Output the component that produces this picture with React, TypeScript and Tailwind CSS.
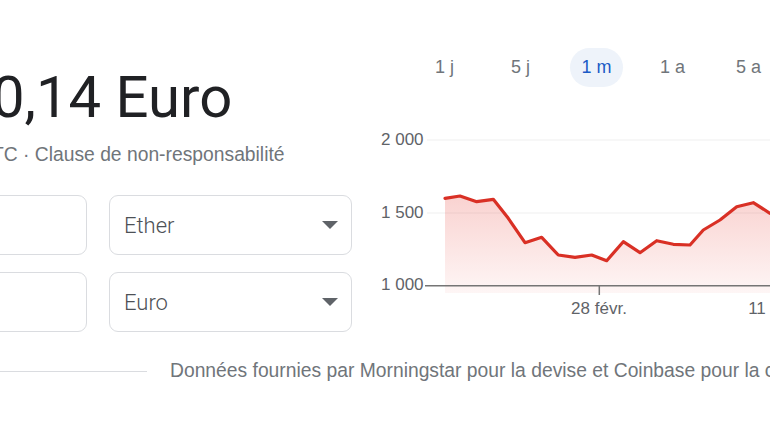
import React from "react";

const points: [number, number][] = [
  [20, 68.3], [35, 66], [51.7, 71.7], [68.3, 69.3], [83.3, 88.3], [100, 112.7],
  [116.7, 107.3], [133.3, 125], [150, 127.3], [166.7, 125], [181.7, 130.7],
  [198.3, 111.7], [215, 122.7], [231.7, 110.7], [248.3, 114.3], [265, 115],
  [278.3, 100], [295, 90], [311.7, 76.7], [328.3, 72.7], [345, 83.3], [362, 92],
];

const tabs = ["1 j", "5 j", "1 m", "1 a", "5 a"];

function Chart() {
  const line = points.map(([x, y], i) => `${i ? "L" : "M"}${x} ${y}`).join(" ");
  const area = `${line} L362 163 L20 163 Z`;
  return (
    <svg width="380" height="170" viewBox="0 0 380 170" className="block shrink-0">
      <defs>
        <linearGradient id="fill" x1="0" y1="66" x2="0" y2="163" gradientUnits="userSpaceOnUse">
          <stop offset="0" stopColor="#e8453c" stopOpacity="0.24" />
          <stop offset="1" stopColor="#e8453c" stopOpacity="0.05" />
        </linearGradient>
      </defs>
      <line x1="2" y1="10" x2="380" y2="10" stroke="#efefef" strokeWidth="1" />
      <line x1="2" y1="83" x2="380" y2="83" stroke="#efefef" strokeWidth="1" />
      <path d={area} fill="url(#fill)" />
      <line x1="-3" y1="155.7" x2="380" y2="155.7" stroke="#757575" strokeWidth="1.5" />
      <line x1="174.3" y1="156" x2="174.3" y2="165" stroke="#757575" strokeWidth="1.5" />
      <path d={line} fill="none" stroke="#d93025" strokeWidth="3.2" strokeLinejoin="round" strokeLinecap="round" />
    </svg>
  );
}

function Caret() {
  return (
    <svg width="16" height="8" viewBox="0 0 16 8" className="shrink-0">
      <path d="M0 0 L16 0 L8 8 Z" fill="#5f6368" />
    </svg>
  );
}

export default function App() {
  return (
    <div className="w-[770px] h-[432px] overflow-hidden bg-white font-['Liberation_Sans',Arial,sans-serif]">
      <div className="flex h-[332px] -ml-[160px] gap-[29px]">
        {/* left: result + converter */}
        <div className="w-[512px] shrink-0 flex flex-col">
          <div className="mt-[68px] ml-[152px] text-[58px] leading-[58px] text-[#202124] font-['Roboto',Arial,sans-serif] whitespace-nowrap">
            0,14 Euro
          </div>
          <div className="mt-[17px] ml-[138px] text-[19.3px] leading-[24px] text-[#70757a] whitespace-nowrap">
            UTC · Clause de non-responsabilité
          </div>
          <div className="mt-[28px] grid grid-cols-[1fr_243px] gap-x-[22px] gap-y-[17px]">
            <div className="h-[60px] rounded-[9px] border border-[#dadce0]" />
            <div className="h-[60px] rounded-[9px] border border-[#dadce0] flex items-center justify-between pl-[14px] pr-[13px]">
              <span className="text-[22px] font-light text-[#4d5156] font-['Roboto',sans-serif]">Ether</span>
              <Caret />
            </div>
            <div className="h-[60px] rounded-[9px] border border-[#dadce0]" />
            <div className="h-[60px] rounded-[9px] border border-[#dadce0] flex items-center justify-between pl-[14px] pr-[13px]">
              <span className="text-[22px] font-light text-[#4d5156] font-['Roboto',sans-serif]">Euro</span>
              <Caret />
            </div>
          </div>
        </div>

        {/* right: chart */}
        <div className="w-[420px] shrink-0 flex flex-col">
          <div className="mt-[48px] ml-[37px] flex gap-[23px]">
            {tabs.map((t) => (
              <div
                key={t}
                className={
                  t === "1 m"
                    ? "w-[53px] h-[39px] rounded-full bg-[#eef3fa] flex items-center justify-center text-[18px] text-[#1a5bc6] font-medium whitespace-nowrap"
                    : "w-[53px] h-[39px] rounded-full flex items-center justify-center text-[18px] text-[#70757a] whitespace-nowrap"
                }
              >
                {t}
              </div>
            ))}
          </div>
          <div className="mt-[43px] flex">
            <div className="w-[44px] shrink-0 flex flex-col gap-[52.5px] text-[17px] leading-[20px] text-[#5f6368] whitespace-nowrap">
              <span>2 000</span>
              <span>1 500</span>
              <span>1 000</span>
            </div>
            <Chart />
          </div>
          <div className="-mt-[1px] flex text-[17px] leading-[20px] text-[#5f6368] whitespace-nowrap">
            <span className="ml-[178px] w-[80px] text-center">28 févr.</span>
            <span className="ml-[98px] w-[40px] text-center">11</span>
          </div>
        </div>
      </div>

      {/* footer */}
      <div className="mt-[27px] flex items-center gap-[23px] h-[24px]">
        <div className="w-[147px] h-px bg-[#dadce0] shrink-0" />
        <span className="text-[19.3px] leading-[24px] text-[#70757a] whitespace-nowrap">
          Données fournies par Morningstar pour la devise et Coinbase pour la cryptomonnaie
        </span>
      </div>
    </div>
  );
}
